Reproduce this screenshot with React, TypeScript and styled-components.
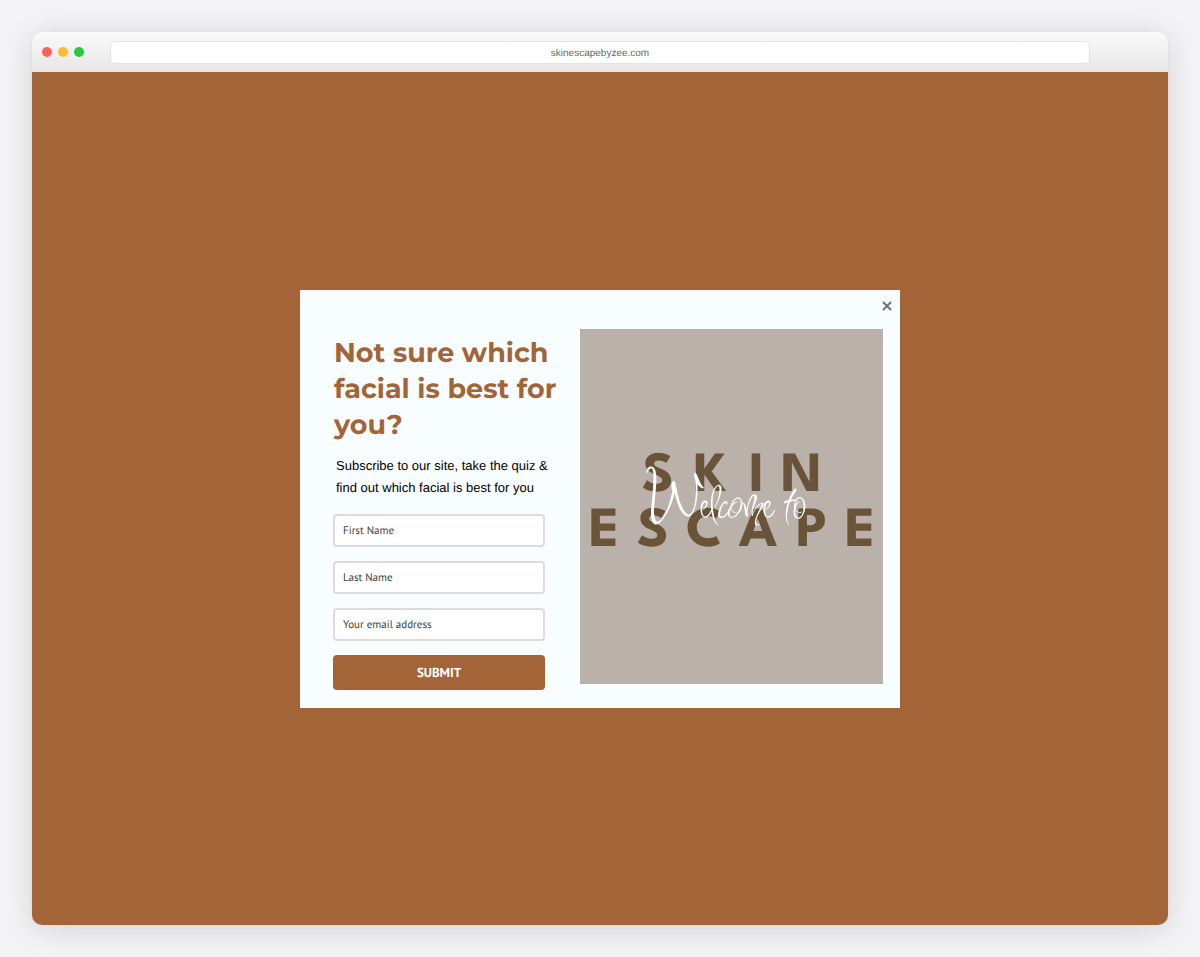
import React from 'react';
import styled, { createGlobalStyle } from 'styled-components';

const brown = '#a36537';

const GlobalStyle = createGlobalStyle`
  *, *::before, *::after { box-sizing: border-box; }
  body {
    margin: 0;
    background: #f4f4f6;
    font-family: "Liberation Sans", Arial, sans-serif;
    text-rendering: geometricPrecision;
  }
`;

const Page = styled.div`
  display: flex;
  min-height: 100vh;
  padding: 32px;
`;

const BrowserWindow = styled.div`
  flex: 1;
  min-width: 0;
  display: flex;
  flex-direction: column;
  border-radius: 10px;
  overflow: hidden;
  box-shadow: 0 0 1px rgba(0, 0, 0, 0.2), 0 4px 32px rgba(0, 0, 0, 0.14);
`;

const TitleBar = styled.header`
  display: grid;
  grid-template-columns: 78px minmax(0, 1fr) 78px;
  align-items: center;
  height: 40px;
  background: linear-gradient(#fafafa, #e7e7e7);
`;

const Lights = styled.div`
  display: flex;
  gap: 6px;
  padding-left: 10px;
`;

const Light = styled.span<{ $color: string }>`
  width: 10px;
  height: 10px;
  border-radius: 50%;
  background: ${({ $color }) => $color};
`;

const Address = styled.div`
  height: 23px;
  border: 1px solid #e3e3e3;
  border-radius: 5px;
  background: #fff;
  color: #666;
  font-size: 10px;
  line-height: 24px;
  text-align: center;
`;

const Stage = styled.main`
  flex: 1;
  display: flex;
  align-items: center;
  justify-content: center;
  padding: 24px;
  background: ${brown};
`;

const Dialog = styled.section`
  position: relative;
  display: grid;
  grid-template-columns: minmax(0, 1fr) 303px;
  align-items: start;
  width: 100%;
  max-width: 600px;
  padding: 39px 17px 18px 33px;
  background: #f8fdff;
`;

const CloseButton = styled.button`
  position: absolute;
  top: 6px;
  right: 3px;
  display: grid;
  place-items: center;
  width: 20px;
  height: 20px;
  padding: 0;
  border: 0;
  background: none;
  color: #6f7375;
  cursor: pointer;
`;

const Copy = styled.div`
  padding-top: 6px;
`;

const Heading = styled.h1`
  margin: 0;
  padding-left: 1px;
  color: ${brown};
  font-family: Montserrat, Inter, sans-serif;
  font-size: 27px;
  font-weight: 700;
  line-height: 36px;
`;

const Intro = styled.p`
  margin: 12px 0 0;
  padding-left: 3px;
  color: #000;
  font-size: 13px;
  line-height: 22px;
`;

const Form = styled.form`
  display: flex;
  flex-direction: column;
  gap: 14px;
  width: 212px;
  margin-top: 15px;
`;

const Field = styled.input`
  width: 100%;
  height: 33px;
  padding: 2px 8px 0;
  border: 2px solid #dcdcdc;
  border-radius: 4px;
  background: #fff;
  color: #3c3c3c;
  font-family: "PT Sans", "Noto Sans", sans-serif;
  font-size: 11px;
  text-rendering: inherit;

  &::placeholder {
    color: #3c3c3c;
    opacity: 1;
  }
`;

const SubmitButton = styled.button`
  height: 35px;
  border: 0;
  border-radius: 4px;
  background: ${brown};
  color: #fff;
  font-family: "PT Sans", "Noto Sans", sans-serif;
  font-size: 13px;
  font-weight: 700;
  text-rendering: inherit;
  cursor: pointer;
`;

const Poster = styled.svg`
  display: block;
  width: 100%;
  height: auto;
  background: #bbb1ab;
`;

const Wordmark = styled.text`
  fill: #69543a;
  font-family: "League Spartan", Lato, sans-serif;
  font-size: 57px;
  font-weight: 700;
`;

const Script = styled.text`
  fill: #fff;
  font-family: Inspiration, "Herr Von Muellerhoff", "Brush Script MT", cursive;
  font-size: 50px;
`;

const Initial = styled.tspan`
  font-size: 66px;
`;

const fields = [
  { name: 'firstName', label: 'First Name', type: 'text' },
  { name: 'lastName', label: 'Last Name', type: 'text' },
  { name: 'email', label: 'Your email address', type: 'email' },
];

export default function App() {
  return (
    <>
      <GlobalStyle />
      <Page>
        <BrowserWindow>
          <TitleBar>
            <Lights>
              <Light $color="#fc605b" />
              <Light $color="#fdbb2e" />
              <Light $color="#28c840" />
            </Lights>
            <Address>skinescapebyzee.com</Address>
          </TitleBar>
          <Stage>
            <Dialog role="dialog" aria-labelledby="quiz-title">
              <CloseButton type="button" aria-label="Close">
                <svg width="10" height="10" viewBox="0 0 10 10" fill="none" stroke="currentColor" strokeWidth="2">
                  <path d="M1 1L9 9M9 1L1 9" />
                </svg>
              </CloseButton>
              <Copy>
                <Heading id="quiz-title">
                  Not sure which
                  <br />
                  facial is best for
                  <br />
                  you?
                </Heading>
                <Intro>
                  Subscribe to our site, take the quiz &amp;
                  <br />
                  find out which facial is best for you
                </Intro>
                <Form onSubmit={(event) => event.preventDefault()}>
                  {fields.map(({ name, label, type }) => (
                    <Field key={name} name={name} type={type} placeholder={label} aria-label={label} />
                  ))}
                  <SubmitButton type="submit">SUBMIT</SubmitButton>
                </Form>
              </Copy>
              <Poster viewBox="0 0 303 355" role="img" aria-label="Welcome to Skin Escape">
                <Wordmark x="62 114 169 201" y="162">SKIN</Wordmark>
                <Wordmark x="9 57 106 159 216 265" y="217">ESCAPE</Wordmark>
                <Script x="66" y="188">
                  <Initial>W</Initial>elcome to
                </Script>
              </Poster>
            </Dialog>
          </Stage>
        </BrowserWindow>
      </Page>
    </>
  );
}
